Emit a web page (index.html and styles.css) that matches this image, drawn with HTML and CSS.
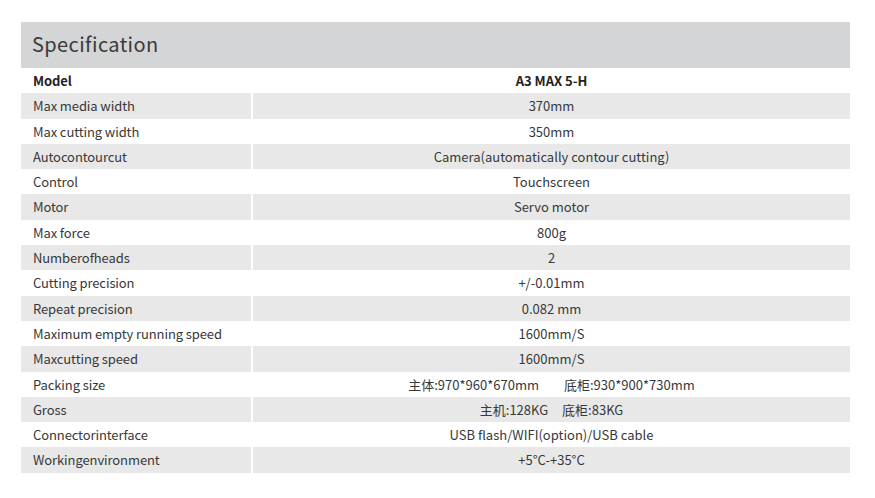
FILE: index.html
```html
<!DOCTYPE html>
<html>
<head>
<meta charset="utf-8">
<link rel="stylesheet" href="styles.css">
</head>
<body>
<div class="spec">
  <div class="title">Specification</div>
  <div class="rows">
    <div class="row head"><div class="k">Model</div><div class="v">A3 MAX 5-H</div></div>
    <div class="row alt"><div class="k">Max media width</div><div class="v">370mm</div></div>
    <div class="row"><div class="k">Max cutting width</div><div class="v">350mm</div></div>
    <div class="row alt"><div class="k">Autocontourcut</div><div class="v">Camera(automatically contour cutting)</div></div>
    <div class="row"><div class="k">Control</div><div class="v">Touchscreen</div></div>
    <div class="row alt"><div class="k">Motor</div><div class="v">Servo motor</div></div>
    <div class="row"><div class="k">Max force</div><div class="v">800g</div></div>
    <div class="row alt"><div class="k">Numberofheads</div><div class="v">2</div></div>
    <div class="row"><div class="k">Cutting precision</div><div class="v">+/-0.01mm</div></div>
    <div class="row alt"><div class="k">Repeat precision</div><div class="v">0.082 mm</div></div>
    <div class="row"><div class="k">Maximum empty running speed</div><div class="v">1600mm/S</div></div>
    <div class="row alt"><div class="k">Maxcutting speed</div><div class="v">1600mm/S</div></div>
    <div class="row"><div class="k">Packing size</div><div class="v">主体:970*960*670mm<span class="sp-wide"></span>底柜:930*900*730mm</div></div>
    <div class="row alt"><div class="k">Gross</div><div class="v">主机:128KG<span class="sp"></span>底柜:83KG</div></div>
    <div class="row"><div class="k">Connectorinterface</div><div class="v">USB flash/WIFI(option)/USB cable</div></div>
    <div class="row alt"><div class="k">Workingenvironment</div><div class="v">+5°C-+35°C</div></div>
  </div>
</div>
</body>
</html>
```
FILE: styles.css
```css
html, body {
  margin: 0;
  padding: 0;
  background: #ffffff;
}
body {
  font-family: "Noto Sans CJK SC", "Noto Sans", sans-serif;
  color: #383838;
}
.spec {
  width: 829px;
  margin: 22px 0 0 21px;
}
.title {
  height: 46px;
  background: #d4d5d6;
  font-size: 20px;
  line-height: 44px;
  padding-left: 11px;
  letter-spacing: 0.4px;
  color: #3a3a3a;
}
.rows {
  display: grid;
  grid-auto-rows: 25.3px;
}
.row {
  display: grid;
  grid-template-columns: 230px 597px;
  column-gap: 2px;
  font-size: 13px;
  line-height: 25px;
}
.row .k {
  padding-left: 12px;
  white-space: nowrap;
  letter-spacing: -0.1px;
}
.row .v {
  text-align: center;
  white-space: nowrap;
}
.row.alt .k,
.row.alt .v {
  background: #e8e8e8;
}
.row.head {
  font-weight: bold;
  color: #222;
}
.sp-wide {
  display: inline-block;
  width: 25px;
}
.sp {
  display: inline-block;
  width: 14px;
}
```
